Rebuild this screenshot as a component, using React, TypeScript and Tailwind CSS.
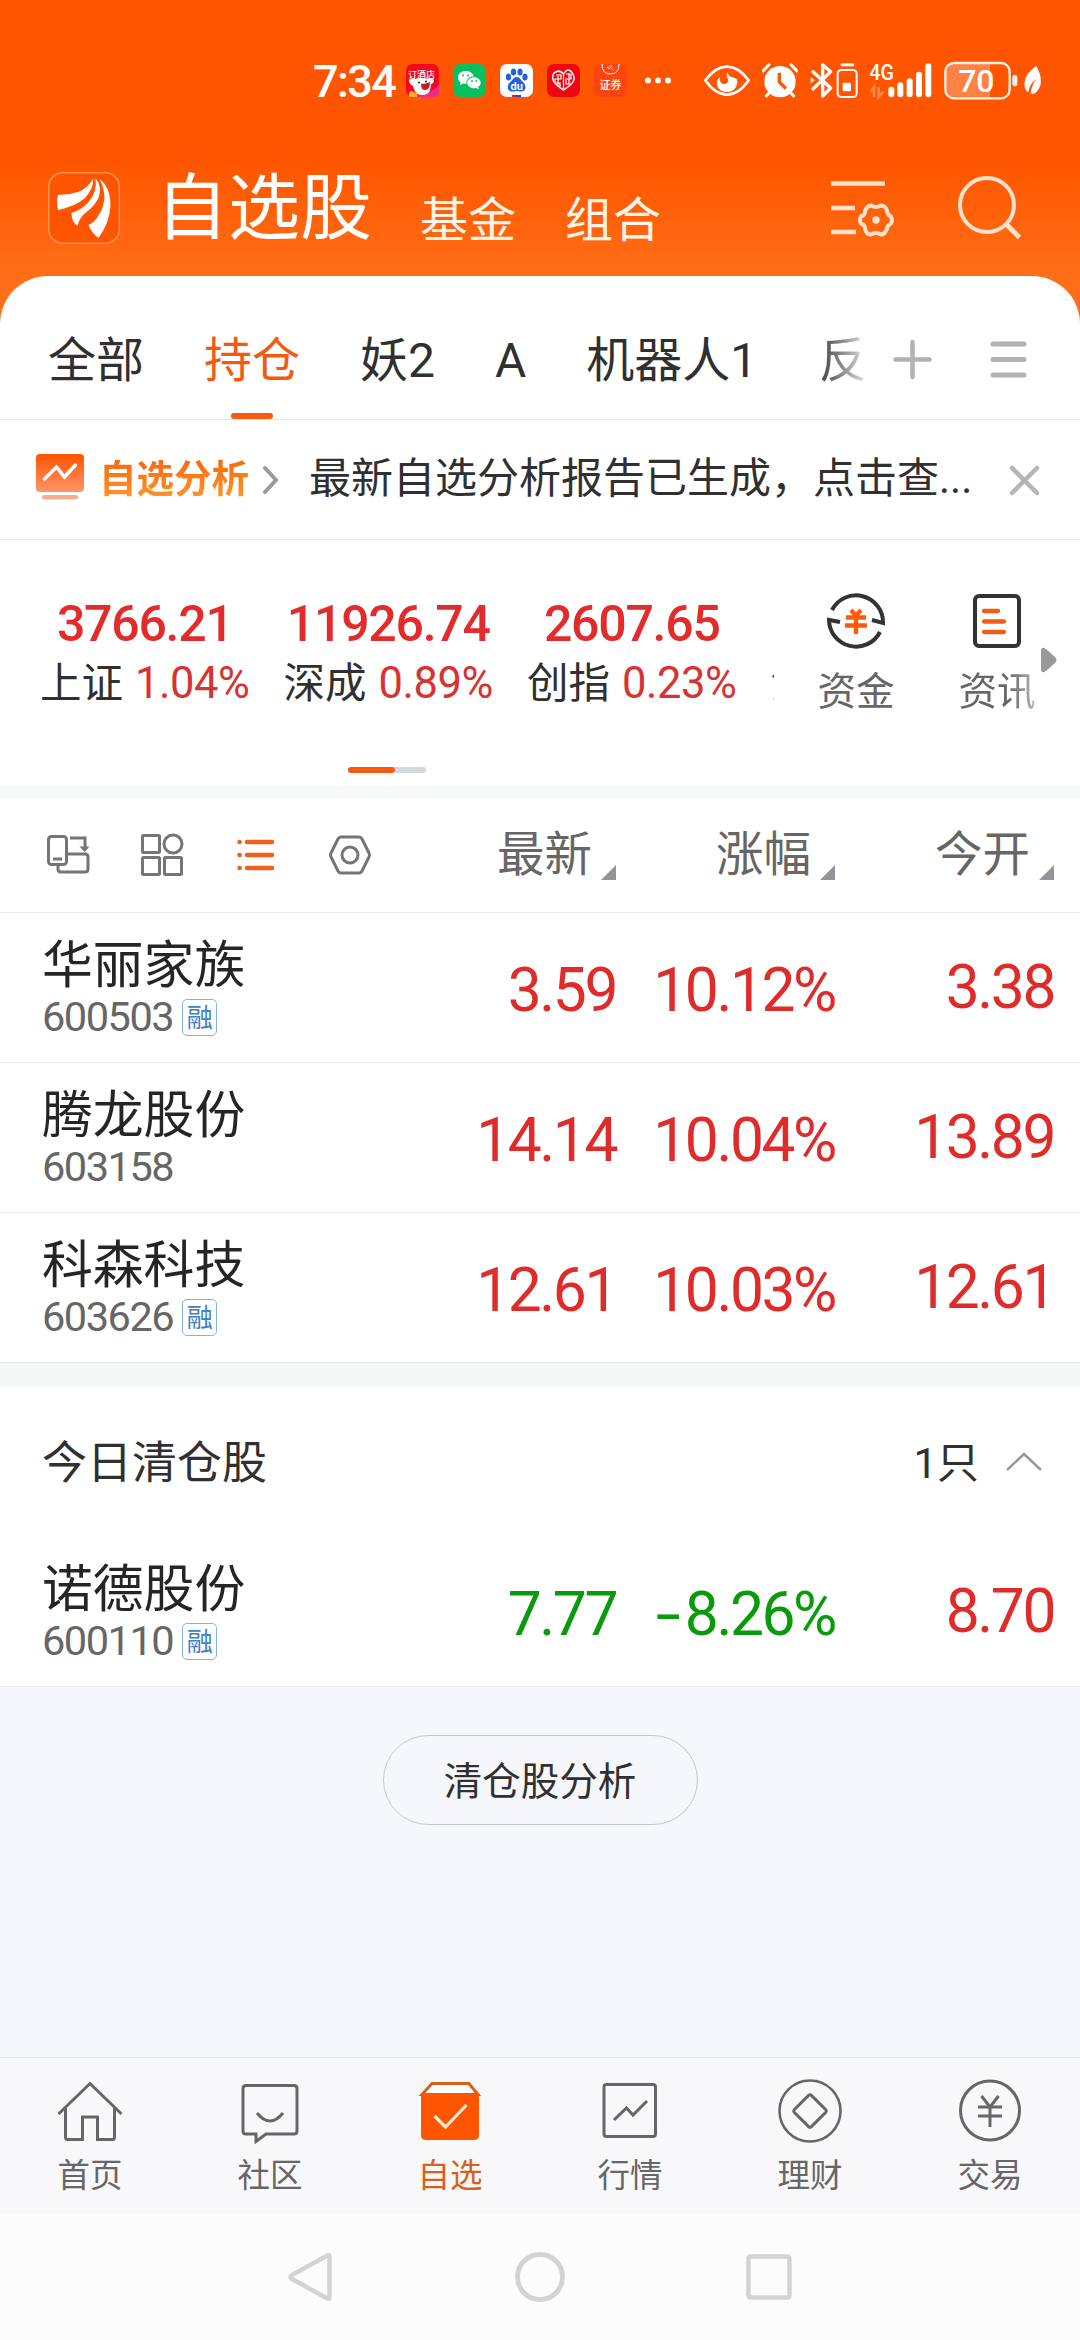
import type { ReactNode } from "react";

type Stock = {
  name: string;
  code: string;
  margin: boolean;
  price: string;
  change: string;
  open: string;
  down?: boolean;
};

const GROUPS = ["全部", "持仓", "妖2", "A", "机器人1"];

const INDEXES = [
  { name: "上证", value: "3766.21", pct: "1.04%" },
  { name: "深成", value: "11926.74", pct: "0.89%" },
  { name: "创指", value: "2607.65", pct: "0.23%" },
];

const COLUMNS = ["最新", "涨幅", "今开"];

const HOLDINGS: Stock[] = [
  { name: "华丽家族", code: "600503", margin: true, price: "3.59", change: "10.12%", open: "3.38" },
  { name: "腾龙股份", code: "603158", margin: false, price: "14.14", change: "10.04%", open: "13.89" },
  { name: "科森科技", code: "603626", margin: true, price: "12.61", change: "10.03%", open: "12.61" },
];

const CLEARED: Stock = {
  name: "诺德股份",
  code: "600110",
  margin: true,
  price: "7.77",
  change: "-8.26%",
  open: "8.70",
  down: true,
};

function StatusBar() {
  return (
    <div className="flex h-[160px] items-start pl-[313px] pt-[60px] text-white">
      <span className="w-[93px] whitespace-nowrap text-[45px] font-medium leading-[44px] tracking-[-0.035em]">7:34</span>
      <div className="flex gap-[14px] pt-1">
        <svg width="33" height="33" viewBox="0 0 33 33">
          <rect width="33" height="33" rx="7" fill="#f4071c" />
          <path d="M2 33c1-5 5-7 9-5 6 3 14 2 22-8v7q0 6-7 6z" fill="#f4288c" />
          <text x="2" y="14" fontSize="9" fontWeight="500" fill="#fff">订酒店</text>
          <path d="M3 16q2-3 6-1 5-2 11 0 6-2 8 1 0 3-3 4 0 10-7 11-9 1-11-9-4-2-4-6z" fill="#fff" />
          <path d="M15 20q5 0 9-2 0 8-5 8-4 0-4-6z" fill="#c51c25" />
          <circle cx="13" cy="18.500" r="1" fill="#222" />
          <circle cx="20" cy="17.500" r="1" fill="#222" />
          <path d="M3 33v-5l3-1 2 2 3-1v5z" fill="#ffb320" />
        </svg>
        <svg width="33" height="33" viewBox="0 0 33 33">
          <rect width="33" height="33" rx="7" fill="#07c160" />
          <path d="M12.500 7C8 7 5 10 5 13.500c0 2 1 3.700 2.700 4.900L7 21l3-1.500q1.500.4 3.300.4C13 15 17 12 20.800 12.300 20 9 16.500 7 12.500 7z" fill="#fff" />
          <path d="M21 13.300c-4 0-6.700 2.500-6.700 5.500S17 24.300 21 24.300q1.200 0 2.300-.4l2.500 1.300-.6-2.200c1.500-1 2.500-2.500 2.500-4.200 0-3-3-5.500-6.700-5.500z" fill="#fff" />
          <g fill="#07c160">
            <circle cx="10" cy="11.500" r="1" />
            <circle cx="15" cy="11.500" r="1" />
            <circle cx="19" cy="17" r=".9" />
            <circle cx="23.300" cy="17" r=".9" />
          </g>
        </svg>
        <svg width="33" height="33" viewBox="0 0 33 33">
          <rect width="33" height="33" rx="7" fill="#fff" />
          <g fill="#2260dd">
            <ellipse cx="8.500" cy="13" rx="2.600" ry="3.500" />
            <ellipse cx="13.500" cy="8" rx="2.600" ry="3.500" />
            <ellipse cx="20" cy="8" rx="2.600" ry="3.500" />
            <ellipse cx="25" cy="13" rx="2.600" ry="3.500" />
            <path d="M16.700 13c3 0 4 3 6.300 5 3.500 3 3.500 9-1.500 9.500-2 .2-3-.5-4.800-.5s-3 .7-5 .5c-5-.5-5-6.500-1.300-9.500 2.300-2 3.300-5 6.300-5z" />
          </g>
          <text x="10.500" y="25.500" fontSize="11" fontWeight="700" fill="#fff">du</text>
          <rect x="12" y="31" width="4" height="2" fill="#d0203a" />
          <rect x="16" y="31" width="5" height="2" fill="#2648c8" />
        </svg>
        <svg width="33" height="33" viewBox="0 0 33 33">
          <rect width="33" height="33" rx="7" fill="#f20512" />
          <path d="M16.500 10Q13 5.500 8.500 8T6.500 17q2 4 10 9 8-5 10-9t-2-9-8 2z" fill="none" stroke="#fff" strokeWidth="1.500" />
          <path d="M9 11h5v4H8v4h5v4M16.500 10v15M19 10h5v5h-5v5h6M11 12v11M22 9v11" fill="none" stroke="#fff" strokeWidth="1.200" />
        </svg>
        <svg width="33" height="33" viewBox="0 0 33 33">
          <rect width="33" height="33" rx="7" fill="#ff4410" />
          <path d="M8 0q0 10 8.500 10T25 0" fill="none" stroke="#fff" strokeWidth="1" />
          <path d="m13 3 3 2M15 2l4 4M17 1l1 2" stroke="#fff" strokeWidth="1" />
          <text x="5.500" y="24.500" fontSize="11" fontWeight="500" fill="#fff">证券</text>
        </svg>
      </div>
      <svg className="ml-4" width="32" height="40" viewBox="0 0 32 40" fill="#fff">
        <circle cx="5" cy="20.500" r="3" />
        <circle cx="15" cy="20.500" r="3" />
        <circle cx="25" cy="20.500" r="3" />
      </svg>
      {/* 护眼、闹钟、蓝牙 */}
      <svg className="ml-[29px]" width="46" height="40" viewBox="72 60 138 120">
        <path d="M76 121q30-41 65-41t65 41q-30 43-65 43t-65-43z" fill="none" stroke="#fff" strokeWidth="8" />
        <path d="M147 93c-9 7-8 15-4 22 5 10-2 18-11 17-9-1-14-8-13-22-16 16-9 45 21 46 21 0 33-15 32-34-1-13-11-25-25-29z" fill="#fff" />
        <path d="M147 91c-8 10 0 18 8 20 9 3 18 5 20 13 1-16-11-32-28-33z" fill="#ff5500" />
      </svg>
      <svg className="ml-3" width="36" height="40" viewBox="246 60 108 120">
        <circle cx="300" cy="125" r="47" fill="#fff" />
        <path d="m249 93 18-19M351 93l-18-19M268 158l-9 10M332 158l9 10" stroke="#fff" strokeWidth="9" strokeLinecap="round" />
        <path d="M298 98v28l20 20" fill="none" stroke="#ff5500" strokeWidth="10" />
      </svg>
      <svg className="ml-3" width="48" height="40" viewBox="388 60 144 120">
        <path d="m394 92 56 52-24 24V74l24 21-56 55" fill="none" stroke="#fff" strokeWidth="10" strokeLinejoin="round" />
        <path d="M390 112l12 9-12 9z" fill="#fff" />
        <rect x="471" y="90" width="57" height="81" rx="11" fill="none" stroke="#fff" strokeWidth="6" />
        <path d="M484 74h32" stroke="#fff" strokeWidth="9" strokeLinecap="round" />
        <rect x="486" y="128" width="25" height="26" rx="4" fill="#fff" />
      </svg>
      <svg className="ml-3" width="62" height="40" viewBox="568 60 186 120">
        <text x="566" y="121" fontSize="66" fontWeight="500" fill="#fff" textLength="74" lengthAdjust="spacingAndGlyphs">4G</text>
        <path d="m571 155 9-13v28M594 142v28l14-15" fill="none" stroke="#ff8a4d" strokeWidth="8" />
        <path d="M632 149v14M659 136v27M687 124v39M715 104v59M743 79v84" stroke="#fff" strokeWidth="18" strokeLinecap="round" />
      </svg>
      <svg className="ml-3" width="98" height="40" viewBox="788 60 294 120">
        <path d="M814 69h112v106H814q-20 0-20-22V91q0-22 20-22z" fill="#ff8144" />
        <rect x="792" y="69" width="193" height="106" rx="26" fill="none" stroke="#fff2e8" strokeWidth="7" />
        <rect x="993" y="105" width="15" height="34" rx="7" fill="#fff2e8" />
        <text x="885" y="156" textAnchor="middle" fontSize="96" fontWeight="500" fill="#fff">70</text>
        <path d="M1065 78q20 36 11 61-8 20-23 24l-5-4q3-25 18-43-22 16-25 41-14-10-11-32 3-25 35-47z" fill="#fff" />
      </svg>
    </div>
  );
}

function Logo() {
  return (
    <svg width="72" height="72" viewBox="0 0 72 72">
      <rect x=".75" y=".75" width="70.500" height="70.500" rx="14" fill="#ff5500" stroke="#ff9254" strokeWidth="1.500" />
      <g fill="#fff">
        <path d="M45 7q1 9-8 19-9 8-27 12-2-8 0-15 10 0 20-3 10-4 15-13z" />
        <path d="M47.500 6q7 9 3 20-4 8-12 14-7 5-9 14-6-4-6-13 10-3 17-11 9-10 7-24z" />
        <path d="M51.500 7q11 8 11 27-1 17-12 32-7-5-10-13 5-2 9-8 7-10 7-21-1-10-5-17z" />
      </g>
    </svg>
  );
}

function Header() {
  return (
    <header className="flex h-[116px] items-start pl-12 pt-3 text-white">
      <Logo />
      <h1 className="ml-[36px] w-[263px] pt-[3px] text-[72px] font-normal leading-[68px]">自选股</h1>
      <span className="w-[145px] pl-[1px] pt-[25px] text-[48px] leading-[48px] text-[#fff4e8]">基金</span>
      <span className="w-[267px] pl-[1px] pt-[25px] text-[48px] leading-[48px] text-[#fff4e8]">组合</span>
      <svg className="mt-[5px]" width="64" height="64" viewBox="0 0 64 64" fill="none" stroke="#ffe2cb" strokeWidth="4.500">
        <path d="M0 6.500h54M0 31h24M0 55h25" />
        <path
          d="M40 28.500q5 3 10 0 5 0 6 6 1 4 4 5 2 4 0 7-4 2-4 5-2 6-6 6-5-3-10 0-5 0-6-6 0-4-4-5-2-3 0-7 4-1 4-5 2-6 6-6z"
          strokeWidth="4"
        />
        <circle cx="45" cy="43" r="3.700" fill="#ffe2cb" stroke="none" />
      </svg>
      <svg className="ml-[63px] mt-1" width="64" height="66" viewBox="0 0 64 66" fill="none" stroke="#ffe2cb" strokeWidth="4">
        <circle cx="29" cy="29" r="27" />
        <path d="m48 48 13.500 13.500" strokeWidth="5" />
      </svg>
    </header>
  );
}

function GroupTabs() {
  return (
    <div className="flex h-[144px] items-stretch border-b border-[#e4e4e4] pl-12 text-[48px] leading-[48px] text-[#303030]">
      <div className="flex gap-[60px]">
        {GROUPS.map((g) => {
          const active = g === "持仓";
          return (
            <div key={g} className="flex flex-col items-center justify-between">
              <span className={active ? "pt-[61px] text-[#f25a12]" : "pt-[61px]"}>{g}</span>
              {active && <i className="h-[6px] w-[42px] rounded-full bg-[#f75a0e]" />}
            </div>
          );
        })}
      </div>
      <span className="ml-auto w-[48px] whitespace-nowrap bg-linear-to-r from-[#404040] to-[#e8e8e8] bg-clip-text pt-[61px] text-transparent">
        反
      </span>
      <svg className="ml-[26px] mt-[63px]" width="40" height="42" viewBox="0 0 40 42" stroke="#b2b2b2" strokeWidth="4.500" strokeLinecap="round">
        <path d="M2.500 20.500h34M19.500 3v35" />
      </svg>
      <svg className="ml-[57px] mr-[53px] mt-[63px]" width="37" height="42" viewBox="0 0 37 42" stroke="#b2b2b2" strokeWidth="5" strokeLinecap="round">
        <path d="M3 5h31M3 20.500h31M3 36h31" />
      </svg>
    </div>
  );
}

function AnalysisBar() {
  return (
    <div className="flex h-[120px] items-center border-b border-[#e4e4e4] pl-9 pb-[5px]">
      <svg width="48" height="48" viewBox="0 0 48 48">
        <defs>
          <linearGradient id="report" x1="0" y1="0" x2="0" y2="1">
            <stop offset="0" stopColor="#ff5200" />
            <stop offset="1" stopColor="#ff9666" />
          </linearGradient>
        </defs>
        <rect y="1" width="48" height="38" rx="4" fill="url(#report)" />
        <rect x="6" y="42" width="36" height="4.500" rx="2.200" fill="#f4ac8c" />
        <path d="m8.500 26 12-12 8 10 11-12" fill="none" stroke="#fff" strokeWidth="3.500" strokeLinecap="round" />
      </svg>
      <b className="ml-[15px] mt-1 bg-linear-to-b from-[#f8660c] to-[#ff962a] bg-clip-text text-[37.500px] font-bold leading-[42px] text-transparent">
        自选分析
      </b>
      <svg className="ml-[13px] mt-[5px]" width="18" height="30" viewBox="0 0 18 30" fill="none" stroke="#9a9a9a" strokeWidth="4" strokeLinecap="round">
        <path d="m3 3 11 12L3 27" />
      </svg>
      <p className="ml-[29px] mt-1 w-[692px] whitespace-nowrap text-[42px] leading-[44px] text-[#303030]">
        最新自选分析报告已生成，点击查...
      </p>
      <svg className="ml-[8px] mt-[6px]" width="31" height="31" viewBox="0 0 31 31" stroke="#b5b5b5" strokeWidth="4.500" strokeLinecap="round">
        <path d="m3 3 25 25M28 3 3 28" />
      </svg>
    </div>
  );
}

function IndexStrip() {
  return (
    <section className="flex h-[246px]">
      <div className="flex w-[774px] flex-col items-center overflow-hidden">
        <div className="flex w-full pl-[23px] pt-[59px]">
          {INDEXES.map((item) => (
            <div key={item.name} className="w-[243.500px] shrink-0 text-center">
              <div className="text-[50px] font-medium leading-[50px] tracking-[-0.025em] text-[#e22b2b]">{item.value}</div>
              <div className="mt-[13px] whitespace-nowrap text-[41.500px] leading-[44px] text-[#303030]">
                {item.name}
                <span className="ml-[12px] text-[43.500px] tracking-[-0.01em] text-[#d83232]">{item.pct}</span>
              </div>
            </div>
          ))}
          <div className="mt-[63px] w-[5px] shrink-0 pl-[17px] text-[41.500px] leading-[44px] text-[#303030]">沪</div>
        </div>
        <div className="mt-[61px] flex h-[6px] w-[78px] overflow-hidden rounded-full bg-[#d4d8dd]">
          <i className="w-[47px] rounded-r-full bg-[#f75a0e]" />
        </div>
      </div>
      <div className="flex pl-[42px] pt-[50px] text-[38.500px] leading-[40px] text-[#666]">
        <div className="flex w-[80px] flex-col items-center">
          <svg width="60" height="62" viewBox="0 0 60 62" fill="none" stroke="#333" strokeWidth="4">
            <path d="M6 20A27 27 0 0 1 57 33l-11-3" />
            <path d="M54 42A27 27 0 0 1 3 30l11 2" />
            <path d="m25 20 5 6 5-6M20 27.500h20M19 35.500h22M30 26v18" stroke="#ff5a0a" strokeWidth="4.300" />
          </svg>
          <span className="mt-[20px]">资金</span>
        </div>
        <div className="ml-[61px] flex w-[80px] flex-col items-center">
          <svg width="60" height="62" viewBox="0 0 60 62" fill="none" stroke="#333" strokeWidth="4">
            <rect x="8" y="6" width="44" height="50" rx="4" />
            <path d="M17 21h14M17 31.500h20M17 42h20" stroke="#f05d14" strokeWidth="4.300" strokeLinecap="round" />
          </svg>
          <span className="mt-[20px] bg-linear-to-r from-[#666] from-65% to-[#bbb] bg-clip-text text-transparent">资讯</span>
        </div>
        <svg className="ml-1 mt-[57px]" width="16" height="26" viewBox="0 0 16 26">
          <path d="M0 3q1-4 5-1l9 8q3 3 0 6l-9 8q-4 3-5-1z" fill="#999" />
        </svg>
      </div>
    </section>
  );
}

function TableHead() {
  return (
    <div className="flex h-[115px] items-center border-b border-[#ebebed] pl-[46px] pr-[26px]">
      <div className="flex w-[351px] items-center gap-[50px]">
        <svg width="44" height="44" viewBox="0 0 44 44" fill="none" stroke="#757575" strokeWidth="3">
          <rect x="2.500" y="3.500" width="18" height="28" rx="3" />
          <path d="M7 26h9M24 5h15v11M21 21h18q3 0 3 3v12q0 3-3 3H15q-3 0-3-3v-4" />
          <path d="M33.500 13.500h10L38.500 19z" fill="#757575" stroke="none" />
        </svg>
        <svg width="44" height="44" viewBox="0 0 44 44" fill="none" stroke="#757575" strokeWidth="3">
          <rect x="2.500" y="2.500" width="17" height="17" rx="1" />
          <circle cx="33" cy="11" r="9" />
          <rect x="2.500" y="24.500" width="17" height="17" rx="1" />
          <rect x="24.500" y="24.500" width="17" height="17" rx="1" />
        </svg>
        <svg width="44" height="44" viewBox="0 0 44 44" stroke="#f06018" strokeWidth="4.500" strokeLinecap="round">
          <path d="M13 9h25M13 22h25M13 35h25M5.500 9h.1M5.500 22h.1M5.500 35h.1" />
        </svg>
        <svg width="44" height="44" viewBox="0 0 44 44" fill="none" stroke="#757575" strokeWidth="3" strokeLinejoin="round">
          <path d="M13 4h18q2 0 3 2l7 14q1 2 0 4l-7 14q-1 2-3 2H13q-2 0-3-2L3 24q-1-2 0-4l7-14q1-2 3-2z" />
          <circle cx="22" cy="22" r="8" />
        </svg>
      </div>
      {COLUMNS.map((c) => (
        <div key={c} className="flex w-[219px] items-center justify-end text-[47.500px] leading-[48px] text-[#666]">
          <span>{c}</span>
          <svg className="ml-[9px] mt-[34px]" width="15" height="15" viewBox="0 0 15 15">
            <path d="M15 0v15H0z" fill="#94949a" />
          </svg>
        </div>
      ))}
    </div>
  );
}

function StockRow({ stock }: { stock: Stock }) {
  const tone = stock.down ? "text-[#0b9a0b]" : "text-[#e02b2b]";
  return (
    <div className="flex h-[150px] border-b border-[#ebebed] pl-[42px] pr-[26px] text-[60.500px] leading-[60px] tracking-[-0.04em]">
      <div className="w-[355px] pt-[26px] tracking-normal">
        <div className="whitespace-nowrap text-[50.800px] leading-[54px] text-[#252525]">{stock.name}</div>
        <div className="mt-[4px] flex h-[40px] items-center text-[41.500px] leading-[40px] tracking-[-0.035em] text-[#666]">
          {stock.code}
          {stock.margin && (
            <span className="ml-[9px] flex h-[37px] w-[35px] items-center justify-center rounded-[5px] border-[1.500px] border-[#86b1dc] pt-0.5 text-[26px] leading-[30px] tracking-normal text-[#3d80c4]">
              融
            </span>
          )}
        </div>
      </div>
      <span className={`w-[219px] pt-[48px] text-right ${tone}`}>{stock.price}</span>
      <span className={`w-[219px] pt-[48px] text-right ${tone}`}>
        {stock.down && <span className="mr-[8px] inline-block origin-right scale-x-150">-</span>}
        {stock.change.replace("-", "")}
      </span>
      <span className="w-[219px] pt-[45px] text-right text-[#e02b2b]">{stock.open}</span>
    </div>
  );
}

function NavItem({ label, active, children }: { label: string; active?: boolean; children: ReactNode }) {
  return (
    <div className={`flex w-[180px] flex-col items-center pt-[18px] ${active ? "text-[#d95f1e]" : "text-[#666]"}`}>
      <svg width="68" height="68" viewBox="0 0 68 68" fill="none" stroke="currentColor" strokeWidth="3">
        {children}
      </svg>
      <span className="mt-[15px] text-[32.500px] leading-[34px]">{label}</span>
    </div>
  );
}

function BottomNav() {
  return (
    <nav className="flex h-[157px] border-t border-[#e2e2e4] bg-[#f8f8fb]">
      <NavItem label="首页">
        <path d="M2.500 38 34 7.500 65.500 38M9.500 32v29q0 2.500 2 2.500h15V41h15v22.500h15q2 0 2-2.500V32" />
      </NavItem>
      <NavItem label="社区">
        <path d="M10 9.500h48q3 0 3 3v42.500q0 3-3 3H30l-10 7.500V58h-10q-3 0-3-3V12.500q0-3 3-3z" />
        <path d="M21 37q13 16 26 0" />
      </NavItem>
      <NavItem label="自选" active>
        <path d="M16 7.500h37l9 11H6z" fill="#fff" />
        <path d="M5 18h58v41q0 5-5 5H10q-5 0-5-5z" fill="#ff5500" stroke="none" />
        <path d="m18.500 40 11 11 21-22" stroke="#ffeadb" strokeWidth="3.200" />
      </NavItem>
      <NavItem label="行情">
        <rect x="8" y="8.500" width="51.500" height="52" rx="2.500" />
        <path d="m18 44 12.500-12 6.500 7 14-14" />
      </NavItem>
      <NavItem label="理财">
        <circle cx="34" cy="35" r="30.500" strokeWidth="2.600" />
        <path d="M32.800 19.200q1.200-1 2.400 0l14.600 14.600q1 1.200 0 2.400L35.200 50.800q-1.200 1-2.400 0L18.200 36.200q-1-1.200 0-2.400z" />
      </NavItem>
      <NavItem label="交易">
        <circle cx="34" cy="34.500" r="29.500" />
        <path d="m25.500 20 8.500 11 8.500-11M22 31h24M22 40h24M34 31v20" />
      </NavItem>
    </nav>
  );
}

function SystemNav() {
  return (
    <div className="flex h-[126px] items-start justify-center gap-[178px] bg-[#fcfcfc] pt-[37px]">
      <svg width="52" height="52" viewBox="0 0 52 52" fill="none" stroke="#d3d3d3" strokeWidth="4.500" strokeLinejoin="round">
        <path d="M45.500 6v40q0 3-3 1L8 28q-3-2 0-4L42.500 5q3-2 3 1z" />
      </svg>
      <svg width="52" height="52" viewBox="0 0 52 52" fill="none" stroke="#d3d3d3" strokeWidth="5">
        <circle cx="26" cy="26" r="22.500" />
      </svg>
      <svg width="52" height="52" viewBox="0 0 52 52" fill="none" stroke="#d3d3d3" strokeWidth="4.500">
        <rect x="4.500" y="5.500" width="41" height="41" rx="2" />
      </svg>
    </div>
  );
}

export default function App() {
  return (
    <div className="flex h-[2340px] w-[1080px] flex-col overflow-hidden bg-[#f6f7fa] font-['Roboto','Noto_Sans_CJK_SC',sans-serif]">
      <div className="bg-[linear-gradient(#ff5500_0px,#ff5500_160px,#ff6f18_280px,#ff6f18_100%)]">
        <StatusBar />
        <Header />
        <div className="rounded-t-[48px] bg-white">
          <GroupTabs />
          <AnalysisBar />
          <IndexStrip />
        </div>
      </div>

      <div className="mt-3 bg-white">
        <TableHead />
        {HOLDINGS.map((s) => (
          <StockRow key={s.code} stock={s} />
        ))}
      </div>

      <div className="mt-6 bg-white">
        <div className="flex h-[150px] items-center justify-between pl-[42px] pr-[37px] pt-1 text-[45px] leading-[46px] text-[#303030]">
          <span>今日清仓股</span>
          <span className="flex items-center">
            <span className="text-[42px]">1只</span>
            <svg className="-mt-1 ml-[26px]" width="38" height="22" viewBox="0 0 38 22" fill="none" stroke="#999" strokeWidth="2.500">
              <path d="m2 19 17-16 17 16" />
            </svg>
          </span>
        </div>
        <StockRow stock={CLEARED} />
      </div>

      <button className="mt-12 flex h-[90px] w-[315px] items-center justify-center self-center rounded-full border border-[#c6c6ca] pt-[3px] text-[38.500px] leading-[40px] text-[#303030]">
        清仓股分析
      </button>

      <div className="mt-auto">
        <BottomNav />
        <SystemNav />
      </div>
    </div>
  );
}
